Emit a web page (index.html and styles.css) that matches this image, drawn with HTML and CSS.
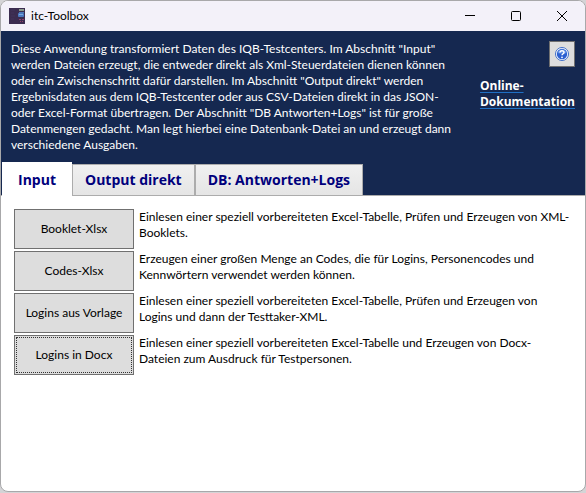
FILE: index.html
```html
<!DOCTYPE html>
<html lang="de">
<head>
<meta charset="utf-8">
<title>itc-Toolbox</title>
<link rel="stylesheet" href="styles.css">
</head>
<body>
<div class="window">
  <header class="titlebar">
    <svg class="app-icon" width="16" height="16" viewBox="0 0 16 16" aria-hidden="true">
      <rect width="16" height="16" fill="#3b2c50"/>
      <path d="M2 2h4M2 5h3M2 8h4M2 11h3" stroke="#43325a"/>
      <rect x="10" y="1" width="5" height="2" fill="#8a9a8c"/>
      <rect x="10" y="4" width="5" height="1" fill="#4c78b8"/>
      <rect x="9" y="5" width="6" height="4" rx="1" fill="#4c78c0"/>
      <path d="M10 6.500h4" stroke="#7cacdc"/>
      <path d="M10 11.500h2M13 11.500h2M11 13.500h1M13 13.500h1" stroke="#94406c"/>
    </svg>
    <h1 class="title">itc-Toolbox</h1>
    <div class="caption-buttons">
      <button class="caption" type="button" aria-label="Minimieren"><svg width="10" height="10" viewBox="0 0 10 10"><path d="M0 4.500h10"/></svg></button>
      <button class="caption" type="button" aria-label="Maximieren"><svg width="10" height="10" viewBox="0 0 10 10"><rect x=".5" y=".5" width="9" height="9" rx="1"/></svg></button>
      <button class="caption" type="button" aria-label="Schließen"><svg width="10" height="10" viewBox="0 0 10 10"><path d="M0 0l10 10M10 0L0 10"/></svg></button>
    </div>
  </header>
  <section class="banner">
    <div class="about">
      <p class="intro">Diese Anwendung transformiert Daten des IQB-Testcenters. Im Abschnitt "Input"<br>werden Dateien erzeugt, die entweder direkt als Xml-Steuerdateien dienen können<br>oder ein Zwischenschritt dafür darstellen. Im Abschnitt "Output direkt" werden<br>Ergebnisdaten aus dem IQB-Testcenter oder aus CSV-Dateien direkt in das JSON-<br>oder Excel-Format übertragen. Der Abschnitt "DB Antworten+Logs" ist für große<br>Datenmengen gedacht. Man legt hierbei eine Datenbank-Datei an und erzeugt dann<br>verschiedene Ausgaben.</p>
      <div class="help">
        <button class="help-button" type="button" aria-label="Hilfe">
          <svg width="16" height="16" viewBox="0 0 16 16">
            <circle cx="8" cy="8" r="6.500" fill="#fff" stroke="#3c6cc8"/>
            <circle cx="8" cy="8" r="5.200" fill="#2b5fd0"/>
            <path d="M3.200 7a5 5 0 0 1 9.600 0Q8 8.500 3.200 7z" fill="#5f8fe6"/>
            <path d="M6 6.600C6 4.200 10 4.200 10 6.400C10 7.800 8 7.700 8 9.300" fill="none" stroke="#fff" stroke-width="1.500"/>
            <circle cx="8" cy="11.300" r=".9" fill="#fff"/>
          </svg>
        </button>
        <a class="docs" href="#">Online-<br>Dokumentation</a>
      </div>
    </div>
    <div class="tabs" role="tablist">
      <button class="tab active" type="button" role="tab" aria-selected="true">Input</button>
      <button class="tab" type="button" role="tab" aria-selected="false">Output direkt</button>
      <button class="tab" type="button" role="tab" aria-selected="false">DB: Antworten+Logs</button>
    </div>
  </section>
  <main class="panel" role="tabpanel">
    <div class="row">
      <button class="action" type="button" aria-describedby="d1">Booklet-Xlsx</button>
      <p class="desc" id="d1">Einlesen einer speziell vorbereiteten Excel-Tabelle, Prüfen und Erzeugen von XML-<br>Booklets.</p>
    </div>
    <div class="row">
      <button class="action" type="button" aria-describedby="d2">Codes-Xlsx</button>
      <p class="desc" id="d2">Erzeugen einer großen Menge an Codes, die für Logins, Personencodes und<br>Kennwörtern verwendet werden können.</p>
    </div>
    <div class="row">
      <button class="action" type="button" aria-describedby="d3">Logins aus Vorlage</button>
      <p class="desc" id="d3">Einlesen einer speziell vorbereiteten Excel-Tabelle, Prüfen und Erzeugen von<br>Logins und dann der Testtaker-XML.</p>
    </div>
    <div class="row">
      <button class="action focused" type="button" aria-describedby="d4">Logins in Docx</button>
      <p class="desc" id="d4">Einlesen einer speziell vorbereiteten Excel-Tabelle und Erzeugen von Docx-<br>Dateien zum Ausdruck für Testpersonen.</p>
    </div>
  </main>
</div>
</body>
</html>
```
FILE: styles.css
```css
* {
  box-sizing: border-box;
}

body {
  margin: 0;
  background: #d4d4d6;
  font: 12px/16px Lato, "Open Sans", sans-serif;
  color: #000;
}

h1,
p {
  margin: 0;
}

button {
  font: inherit;
  color: inherit;
  padding: 0;
}

.window {
  display: flex;
  flex-direction: column;
  min-height: calc(100vh - 1px);
  border: 1px solid #a8a8aa;
  border-radius: 8px;
  background: #fff;
  overflow: hidden;
}

.titlebar {
  display: flex;
  align-items: center;
  height: 30px;
  padding-left: 8px;
  gap: 6px;
  background: #f3f1f9;
}

.title {
  font-size: 12px;
  font-weight: 400;
}

.caption-buttons {
  display: flex;
  align-self: stretch;
  margin-left: auto;
}

.caption {
  display: grid;
  place-items: center;
  width: 46px;
  border: 0;
  background: none;
}

.caption svg {
  fill: none;
  stroke: #000;
}

.banner {
  background: #152850;
}

.about {
  display: flex;
  justify-content: space-between;
  padding: 10px 10px 9px;
  color: #fff;
}

.intro {
  white-space: nowrap;
}

.help {
  display: flex;
  flex-direction: column;
  align-items: flex-end;
  gap: 11px;
}

.help-button {
  display: grid;
  place-items: center;
  width: 26px;
  height: 26px;
  border: 1px solid #707070;
  background: #ddd;
}

.docs {
  color: #fff;
  font-family: "Open Sans", sans-serif;
  font-weight: 700;
  text-decoration: underline 1px #1f6fc4;
  text-underline-offset: 2px;
}

.tabs {
  display: flex;
  align-items: flex-end;
  padding-left: 1px;
  border-bottom: 1px solid #acacac;
}

.tab {
  height: 31px;
  padding: 0 12px;
  border: 1px solid #acacac;
  border-bottom: 0;
  background: linear-gradient(#f0f0f0, #e5e5e5);
  color: #00007c;
  font-family: "Open Sans", sans-serif;
  font-size: 14px;
  font-weight: 700;
  white-space: nowrap;
}

.tab.active {
  height: 34px;
  margin-bottom: -1px;
  padding: 0 15px;
  border-color: #fff;
  background: #fff;
}

.panel {
  display: flex;
  flex-direction: column;
  gap: 2px;
  padding: 13px;
}

.row {
  display: flex;
  gap: 5px;
}

.action {
  flex: none;
  width: 120px;
  height: 40px;
  padding: 0 10px;
  border: 1px solid #707070;
  background: #ddd;
  overflow: hidden;
  white-space: nowrap;
}

.action.focused {
  outline: 1px dotted #333;
  outline-offset: -3px;
}

.desc {
  white-space: nowrap;
}
```
